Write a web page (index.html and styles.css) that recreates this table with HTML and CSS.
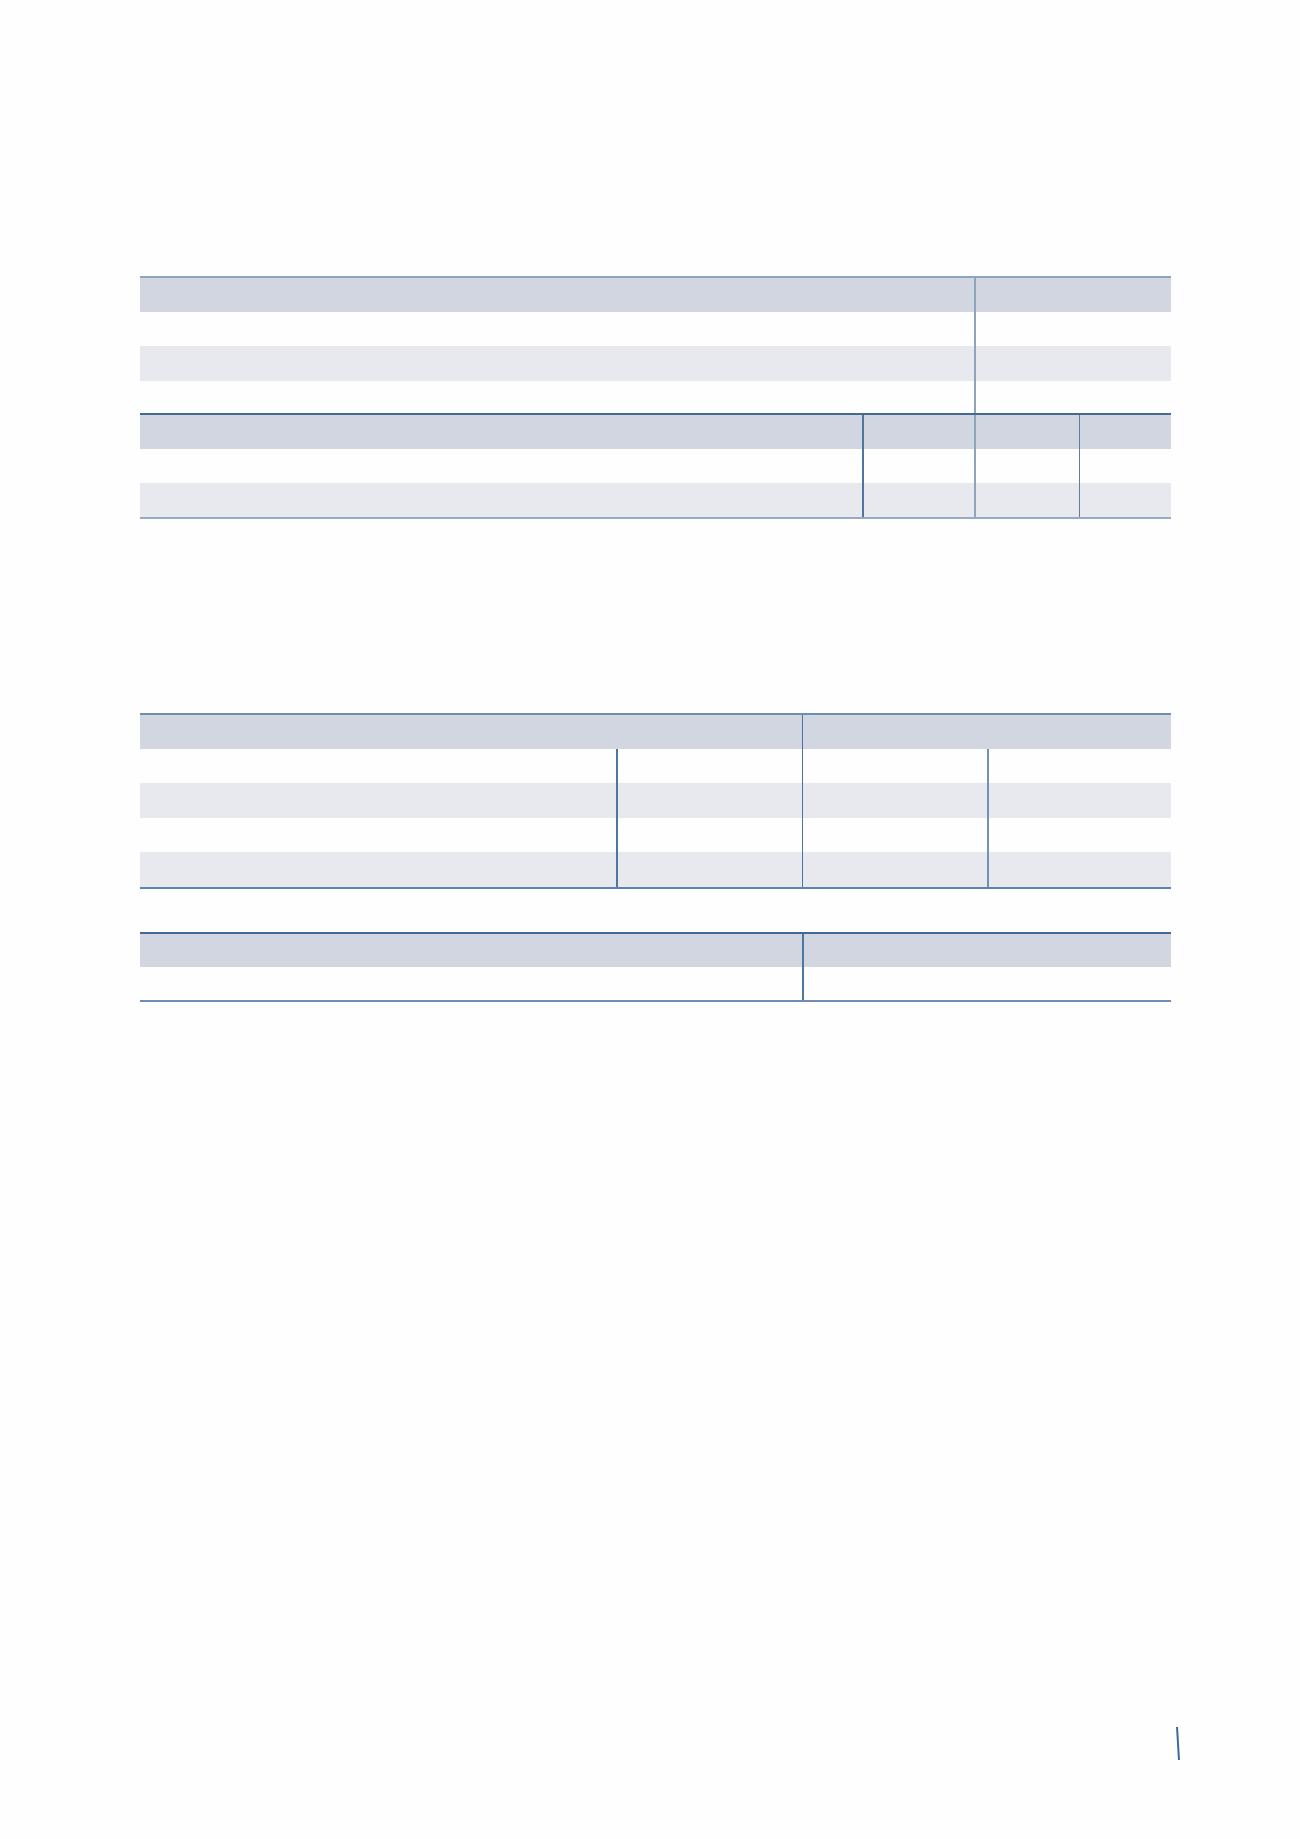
FILE: index.html
```html
<!DOCTYPE html>
<html lang="en">
<head>
<meta charset="utf-8">
<title>Tables</title>
<link rel="stylesheet" href="styles.css">
</head>
<body>
<main class="page">
  <section class="tbl tbl-a">
    <div class="row head"><div class="c"></div><div class="c vl-light"></div></div>
    <div class="row r34"><div class="c"></div><div class="c vl-light"></div></div>
    <div class="row r35 stripe"><div class="c"></div><div class="c vl-light"></div></div>
    <div class="row r32"><div class="c"></div><div class="c vl-light"></div></div>
  </section>
  <section class="tbl tbl-b">
    <div class="row head"><div class="c"></div><div class="c vl-dark2"></div><div class="c vl-light"></div><div class="c vl-mid1"></div></div>
    <div class="row r34"><div class="c"></div><div class="c vl-dark2"></div><div class="c vl-light"></div><div class="c vl-mid1"></div></div>
    <div class="row r34 stripe"><div class="c"></div><div class="c vl-dark2"></div><div class="c vl-light"></div><div class="c vl-mid1"></div></div>
  </section>

  <section class="tbl tbl-c">
    <div class="row head"><div class="c span2"></div><div class="c span2 vl-dark1"></div></div>
    <div class="row r34"><div class="c"></div><div class="c vl-dark2"></div><div class="c vl-dark1"></div><div class="c vl-mid2"></div></div>
    <div class="row r35 stripe"><div class="c"></div><div class="c vl-dark2"></div><div class="c vl-dark1"></div><div class="c vl-mid2"></div></div>
    <div class="row r34"><div class="c"></div><div class="c vl-dark2"></div><div class="c vl-dark1"></div><div class="c vl-mid2"></div></div>
    <div class="row r35 stripe"><div class="c"></div><div class="c vl-dark2"></div><div class="c vl-dark1"></div><div class="c vl-mid2"></div></div>
  </section>

  <section class="tbl tbl-d">
    <div class="row head"><div class="c"></div><div class="c vl-dark2"></div></div>
    <div class="row r33"><div class="c"></div><div class="c vl-dark2"></div></div>
  </section>

  <footer class="foot">
    <svg class="mark" width="6" height="36" viewBox="0 0 6 36" aria-hidden="true">
      <line x1="2" y1="1" x2="4" y2="34" stroke="#3e6a98" stroke-width="2"/>
    </svg>
  </footer>
</main>
</body>
</html>
```

FILE: styles.css
```css
html, body {
  margin: 0;
  padding: 0;
  background: #fefefe;
  font-family: "Liberation Sans", Arial, sans-serif;
}

.page {
  width: 1300px;
  padding: 276px 0 0 140px;
  box-sizing: border-box;
  min-height: 1839px;
}

.tbl {
  width: 1031px;
  display: flex;
  flex-direction: column;
}

.row {
  display: grid;
  box-sizing: border-box;
  background: #fefefe;
}

.row.head { background: #d1d6e1; height: 36px; }
.row.stripe { background: #e8e9ef; }
.row.r32 { height: 32px; }
.row.r33 { height: 33px; }
.row.r34 { height: 34px; }
.row.r35 { height: 35px; }

.c { box-sizing: border-box; }
.span2 { grid-column: span 2; }

.vl-light { border-left: 2px solid #8ea4ba; }
.vl-dark2 { border-left: 2px solid #4e76a1; }
.vl-dark1 { border-left: 1px solid #4a74a0; }
.vl-mid1 { border-left: 1px solid #5b7fa5; }
.vl-mid2 { border-left: 2px solid #7192b4; }

/* table A */
.tbl-a .row { grid-template-columns: 834px 197px; }
.tbl-a .row.head { border-top: 2px solid #8ea4ba; }

/* table B */
.tbl-b .row { grid-template-columns: 722px 112px 105px 92px; }
.tbl-b .row.head { border-top: 2px solid #46698f; }
.tbl-b { border-bottom: 2px solid #98aac0; }

/* table C */
.tbl-c { margin-top: 194px; border-bottom: 2px solid #5a83ad; }
.tbl-c .row { grid-template-columns: 476px 186px 185px 184px; }
.tbl-c .row.head { border-top: 2px solid #6a8fb3; }

/* table D */
.tbl-d { margin-top: 43px; border-bottom: 2px solid #6f8db0; }
.tbl-d .row { grid-template-columns: 662px 369px; }
.tbl-d .row.head { border-top: 2px solid #3f6a98; height: 35px; }

.foot {
  margin-top: 724px;
  width: 1041px;
  display: flex;
  justify-content: flex-end;
}

.mark { display: block; }
```
